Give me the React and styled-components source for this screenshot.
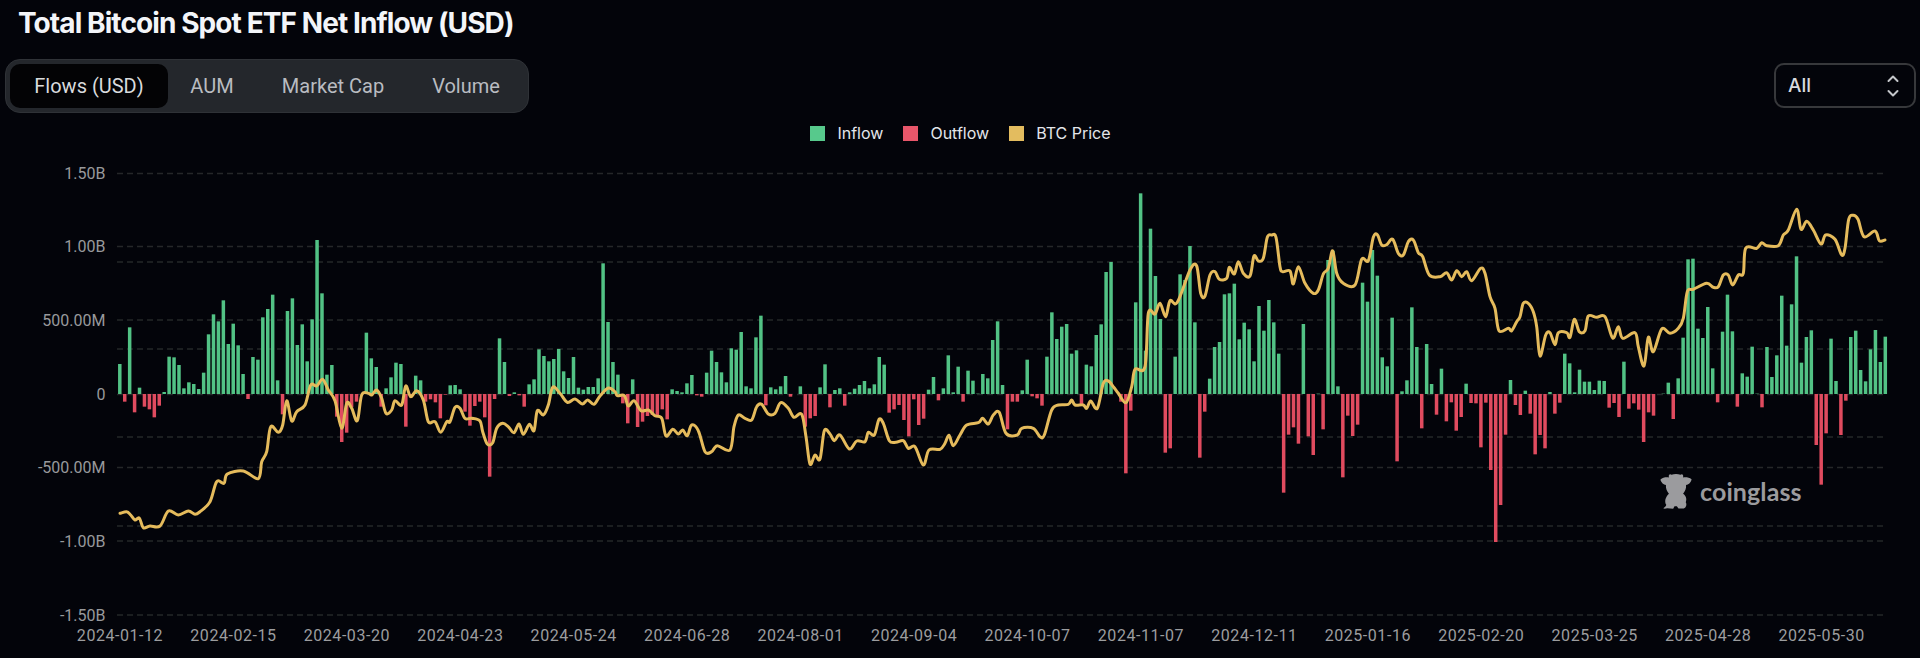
import React from "react";
import styled, { createGlobalStyle } from "styled-components";

const Global = createGlobalStyle`
  html, body { margin: 0; padding: 0; background: #03040a; overflow: hidden; }
  body { height: 658px; font-family: Roboto, "Liberation Sans", sans-serif; }
`;
const Page = styled.div`width: 1920px; height: 658px; background: #03040a; overflow: hidden;`;
const Title = styled.h1`
  margin: 0; height: 59px; padding: 6px 0 0 18px; box-sizing: border-box;
  font: 700 28px/34px Inter, "Liberation Sans", sans-serif; letter-spacing: -0.91px; color: #f3f5f9;
`;
const Header = styled.header`
  display: grid; grid-template-columns: 1fr auto 1fr; align-items: start; padding: 0 4px 0 5px; height: 79px;
`;
const Tabs = styled.nav`
  justify-self: start; box-sizing: border-box; height: 54px; padding: 4px 6px 4px 4px; display: flex;
  background: #24272c; border: 1px solid #2f3237; border-radius: 15px;
`;
const Tab = styled.div`
  box-sizing: border-box; height: 44px; width: ${p => p.$w}px; display: flex; align-items: center; justify-content: center;
  border-radius: 10px; font-size: 20px; color: ${p => p.$active ? "#d9dbde" : "#b9bcc1"};
  background: ${p => p.$active ? "#030305" : "transparent"};
`;
const Legend = styled.div`display: flex; align-items: center; gap: 20px; padding-top: 67px; height: 15px;`;
const LegendItem = styled.div`display: flex; align-items: center; gap: 12px; font: 400 16px/15px Inter, sans-serif; color: #e4e6ea;`;
const Swatch = styled.span`width: 15px; height: 15px; background: ${p => p.$c}; display: block;`;
const Select = styled.div`
  justify-self: end; margin-top: 4px; box-sizing: border-box; width: 142px; height: 45px; display: flex; align-items: center; justify-content: space-between;
  padding: 0 14px 0 12px; border: 2px solid #37383b; border-radius: 10px; color: #d8dade; font: 500 19px Inter, sans-serif;
`;
const ChartWrap = styled.div`position: relative; margin-top: 12px; width: 1920px; height: 508px;`;
const ChartSvg = styled.svg`display: block; width: 1920px; height: 508px;`;
const AxisText = styled.text`font: 400 16px Roboto, sans-serif; fill: #98999c;`;
const DateText = styled.text`font: 400 16px Roboto, sans-serif; letter-spacing: 0.55px; fill: #9c9d9f;`;
const Mark = styled.div`position: absolute; left: 1660px; top: 323px; display: flex; align-items: center; gap: 8px;`;
const MarkText = styled.span`font: 700 25px/36px Lato, "Noto Sans", sans-serif; color: #9b9b9e; letter-spacing: 0.1px;`;

const raw = [
 90,-23,200,-55,19,-38,-46,-70,-35,6,112,110,87,17,35,30,15,64,179,239,218,281,150,211,146,60,-15,111,103,230,255,298,41,-61,249,287,147,209,98,224,462,302,58,87,-68,-144,-116,-40,-23,0,184,107,81,-38,17,50,94,90,-98,-10,55,41,-23,-16,-25,-73,-2,26,27,14,-53,-95,-36,
 -23,-70,-248,-15,167,96,-6,5,-4,-38,29,44,134,114,98,105,135,68,48,111,19,13,21,21,47,392,216,96,58,-28,-88,44,-99,-83,-66,-63,-68,-46,-76,14,9,5,32,57,-4,-8,64,130,96,65,35,137,133,186,23,17,170,235,-34,20,14,23,54,-8,0,23,-98,-73,-66,20,89,-40,12,17,-35,5,16,27,39,17,29,111,88,-56,-46,-33,-78,-127,-16,-93,-74,13,51,-19,17,116,5,82,
 -23,70,40,1,60,47,162,218,27,-106,-23,-23,11,103,-7,-13,-35,112,245,165,202,210,121,131,-31,88,83,177,209,366,396,0,-23,-238,-50,275,602,130,496,354,225,-176,-163,112,359,342,444,215,-191,-53,46,141,156,299,302,331,164,214,194,98,264,190,282,215,121,-296,-122,-100,-149,210,-127,-183,1,-106,402,430,23,-250,-65,-126,-92,334,277,432,355,110,83,229,-202,8,41,260,141,-103,150,30,-62,
 76,-82,-25,-110,-69,31,-27,-28,-160,-26,-228,-444,-333,-122,42,-33,-63,10,-59,-181,-123,-163,6,-59,-26,121,92,5,73,37,37,12,40,39,-41,-27,-69,97,-44,-28,-47,-144,-55,-65,0,1,34,-75,47,169,404,406,196,168,261,77,-25,187,298,188,-38,62,52,142,1,-40,141,51,116,295,145,269,413,94,171,191,-153,-272,-118,166,39,-123,-20,171,190,72,38,134,192,96,172,
];
const Z = 394, X0 = 119.8, X1 = 1885.3;
const pitch = (X1 - X0) / (raw.length - 1);

const seg = (x0, y0, pts) => pts.map(([x, y]) => [x0 + x / 3, y0 + y / 3]);
const linePts = [
 ...seg(100, 400, [[60,340],[80,335],[92,345],[105,360],[118,354],[130,383],[150,378],[180,378],[205,333],[235,345],[265,333],[285,343],[300,335],[330,305],[350,245],[372,250],[382,222],[430,213],[475,236],[485,185],[500,155],[512,80],[535,97],[548,75]]),
 ...seg(0, 160, [[860,722],[875,783],[890,755],[915,735],[932,675],[950,678],[968,658],[985,690],[1005,722],[1025,805],[1040,730],[1055,745],[1072,782],[1085,705],[1105,700],[1115,705],[1130,690],[1145,715],[1158,760],[1175,750],[1185,722],[1205,735],[1217,678],[1232,710],[1250,692],[1270,720],[1285,785],[1305,785],[1322,817],[1340,785],[1350,785],[1365,742],[1380,745],[1395,775],[1415,775]]),
 ...seg(480, 160, [[0,783],[8,815],[22,852],[38,848],[50,805],[68,790],[85,800],[102,818],[117,792],[130,823],[148,793],[162,812],[172,752],[190,765],[205,735],[218,682],[240,700],[262,727],[285,717],[307,732],[323,720],[342,733],[360,708],[385,684],[405,695],[412,707],[433,707],[445,738],[462,722],[483,752],[505,750],[525,767],[545,775],[558,828],[578,808],[595,822],[608,810],[622,827],[635,795],[655,812],[675,875],[695,875],[712,857],[750,870],[762,800],[775,765],[795,775],[815,780],[830,740],[845,733],[865,762],[885,760],[902,728],[925,745],[942,772],[965,763],[978,830],[990,912],[1005,885],[1020,897],[1033,812],[1050,822],[1063,842],[1080,825],[1108,867],[1130,843],[1155,845],[1165,817],[1183,825],[1197,778],[1210,790],[1228,842],[1248,847],[1270,842],[1285,865],[1305,860],[1330,915],[1347,870],[1380,868],[1395,850],[1407,826],[1420,857]]),
 ...seg(960, 160, [[0,825],[20,795],[55,788],[68,775],[85,792],[100,765],[118,757],[138,820],[172,825],[185,805],[220,805],[240,830],[253,825],[275,750],[295,735],[325,733],[335,720],[345,735],[370,735],[380,745],[392,723],[412,745],[430,670],[445,663],[460,680],[475,700],[498,728],[515,680],[525,628],[555,620],[565,460],[585,462],[600,430],[617,470],[630,422],[652,427],[690,330],[710,318],[722,400],[735,408],[750,345],[765,335],[778,358],[800,355],[808,322],[823,342],[835,305],[850,340],[870,348],[882,288],[895,303],[910,295],[922,232],[935,225],[948,232],[960,320],[968,335],[990,333],[1000,372],[1015,320],[1035,370],[1060,400],[1075,390],[1090,342],[1105,325],[1118,272],[1130,340],[1150,370],[1185,375],[1205,298],[1225,302],[1240,232],[1252,224],[1265,255],[1280,254],[1298,238],[1315,280],[1330,285],[1345,245],[1360,240],[1375,278],[1388,290],[1408,345]]),
 ...seg(1440, 180, [[0,290],[20,278],[35,300],[50,272],[65,290],[80,275],[95,302],[122,265],[135,280],[150,350],[165,385],[177,452],[205,445],[215,452],[230,425],[240,410],[250,370],[265,370],[280,395],[290,440],[300,528],[317,465],[330,458],[345,494],[355,458],[380,458],[390,472],[403,418],[418,455],[435,452],[445,408],[470,412],[495,410],[518,474],[535,440],[548,475],[585,458],[595,500],[612,558],[625,472],[640,515],[665,447],[690,460],[715,445],[730,415],[742,335],[760,328],[800,310],[820,322],[835,320],[850,285],[865,285],[878,315],[895,285],[910,280],[917,205],[950,205],[965,188],[980,197],[1015,197],[1030,165],[1045,150],[1070,88],[1083,148],[1100,124],[1120,150],[1143,192],[1157,165],[1185,178],[1205,225],[1215,205],[1226,118],[1240,106],[1254,118],[1272,170],[1305,153],[1318,182],[1335,180]]),
];
const smooth = pts => {
  let d = `M${pts[0][0].toFixed(1)} ${pts[0][1].toFixed(1)}`;
  for (let i = 0; i < pts.length - 1; i++) {
    const p0 = pts[Math.max(0, i - 1)], p1 = pts[i], p2 = pts[i + 1], p3 = pts[Math.min(pts.length - 1, i + 2)];
    const c1 = [p1[0] + (p2[0] - p0[0]) / 6, p1[1] + (p2[1] - p0[1]) / 6];
    const c2 = [p2[0] - (p3[0] - p1[0]) / 6, p2[1] - (p3[1] - p1[1]) / 6];
    d += `C${c1[0].toFixed(1)} ${c1[1].toFixed(1)} ${c2[0].toFixed(1)} ${c2[1].toFixed(1)} ${p2[0].toFixed(1)} ${p2[1].toFixed(1)}`;
  }
  return d;
};
const gridYs = [173.5, 246.5, 320, 394.5, 467.5, 541, 615, 262, 349, 437, 526];
const yLabels = [["1.50B", 173.5], ["1.00B", 246.5], ["500.00M", 320], ["0", 394], ["-500.00M", 467.5], ["-1.00B", 541], ["-1.50B", 615]];
const dates = ["2024-01-12","2024-02-15","2024-03-20","2024-04-23","2024-05-24","2024-06-28","2024-08-01","2024-09-04","2024-10-07","2024-11-07","2024-12-11","2025-01-16","2025-02-20","2025-03-25","2025-04-28","2025-05-30"];

const Logo = () => (
  <svg width="32" height="36" viewBox="0 0 97 108" fill="#9b9b9e">
    <path d="M1 20C8 13 18 12 27 13C25 5 30 1 35 5C43 2 54 2 62 5C67 1 72 5 70 13C79 12 89 13 96 19C93 30 86 35 79 36C80 46 76 56 70 62C79 68 82 78 78 88C82 94 80 104 72 107L56 107L51 100L44 100L40 108L22 106C16 108 12 108 10 106C16 102 18 100 19 96C13 86 16 72 27 62C21 55 17 46 18 36C11 35 4 29 1 20Z" />
  </svg>
);
const UpDown = () => (
  <svg width="14" height="24" viewBox="0 0 14 24" fill="none" stroke="#c4c6ca" strokeWidth="2" strokeLinecap="round" strokeLinejoin="round">
    <path d="M2.5 7L7 2.5L11.5 7" />
    <path d="M2.5 17L7 21.5L11.5 17" />
  </svg>
);

export default function App() {
  return (
    <Page>
      <Global />
      <Title>Total Bitcoin Spot ETF Net Inflow (USD)</Title>
      <Header>
        <Tabs>
          <Tab $active $w={158}>Flows (USD)</Tab>
          <Tab $w={88}>AUM</Tab>
          <Tab $w={154}>Market Cap</Tab>
          <Tab $w={112}>Volume</Tab>
        </Tabs>
        <Legend>
          <LegendItem><Swatch $c="#57c98c" />Inflow</LegendItem>
          <LegendItem><Swatch $c="#e8566a" />Outflow</LegendItem>
          <LegendItem><Swatch $c="#e3bc5f" />BTC Price</LegendItem>
        </Legend>
        <Select>All<UpDown /></Select>
      </Header>
      <ChartWrap>
        <ChartSvg viewBox="0 150 1920 508">
          {gridYs.map(y => <line key={y} x1="117" x2="1887" y1={y} y2={y} stroke="#252729" strokeWidth="1.5" strokeDasharray="6 4" />)}
          {yLabels.map(([t, y]) => <AxisText key={t} x="105.5" y={y + 5.5} textAnchor="end">{t}</AxisText>)}
          {dates.map((t, i) => <DateText key={t} x={120 + i * 113.44} y="641" textAnchor="middle">{t}</DateText>)}
          {raw.map((v, i) => v === 0 ? null : (
            <rect key={i} x={X0 + i * pitch - 1.75} width="3.5"
              y={v > 0 ? Z - v / 3 : Z} height={Math.abs(v) / 3}
              fill={v > 0 ? "#52c285" : "#e04b5f"} />
          ))}
          <path d={smooth(linePts)} fill="none" stroke="#e5bb5c" strokeWidth="3" strokeLinecap="round" strokeLinejoin="round" />
        </ChartSvg>
        <Mark><Logo /><MarkText>coinglass</MarkText></Mark>
      </ChartWrap>
    </Page>
  );
}
